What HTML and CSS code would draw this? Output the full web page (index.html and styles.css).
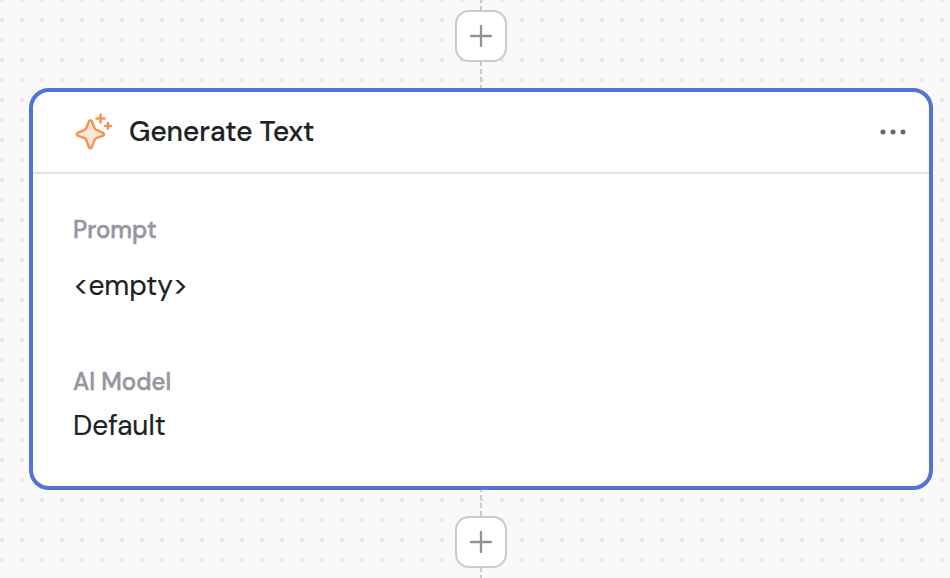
FILE: index.html
```html
<!DOCTYPE html>
<html lang="en">
<head>
    <meta charset="UTF-8">
    <meta name="viewport" content="width=device-width, initial-scale=1.0">
    <title>Workflow editor</title>
    <link rel="stylesheet" href="styles.css">
</head>
<body>
    <main class="canvas">
        <div class="line line-top"></div>
        <button class="add-btn" aria-label="Add step">
            <svg width="24" height="24" viewBox="0 0 24 24" fill="none" stroke="currentColor" stroke-width="2.3" stroke-linecap="round">
                <path d="M2 12h20M12 2v20"></path>
            </svg>
        </button>
        <div class="line line-in"></div>

        <section class="card">
            <header class="card-header">
                <svg class="icon" width="40" height="40" viewBox="0 0 40 40" fill="none" stroke="currentColor" stroke-width="2.5" stroke-linecap="round" stroke-linejoin="round">
                    <path fill="#fde8dc" d="M17 9.2Q18.4 7.2 19.8 9.2L22.6 16.1Q23.1 17.4 24.4 17.9L31.1 20.9Q33.1 22.3 31.1 23.6L24.4 26.1Q23.1 26.6 22.6 27.9L19.8 35.2Q18.4 37.2 17 35.2L14.3 27.9Q13.8 26.6 12.5 26.1L5.7 23.6Q3.7 22.3 5.7 20.9L12.5 17.9Q13.8 17.4 14.3 16.1Z"></path>
                    <path d="M28.5 2.5v8M24.5 6.5h8M36 11.1v5.6M33.2 13.9h5.6"></path>
                </svg>
                <h1>Generate Text</h1>
                <button class="menu-btn" aria-label="More options">
                    <svg width="26" height="6" viewBox="0 0 26 6" fill="currentColor">
                        <circle cx="3" cy="3" r="2.5"></circle>
                        <circle cx="13" cy="3" r="2.5"></circle>
                        <circle cx="23" cy="3" r="2.5"></circle>
                    </svg>
                </button>
            </header>
            <dl class="fields">
                <dt>Prompt</dt>
                <dd class="prompt">&lt;empty&gt;</dd>
                <dt class="model-label">AI Model</dt>
                <dd class="model">Default</dd>
            </dl>
        </section>

        <div class="line line-out"></div>
        <button class="add-btn" aria-label="Add step">
            <svg width="24" height="24" viewBox="0 0 24 24" fill="none" stroke="currentColor" stroke-width="2.3" stroke-linecap="round">
                <path d="M2 12h20M12 2v20"></path>
            </svg>
        </button>
        <div class="line line-bottom"></div>
    </main>
</body>
</html>
```

FILE: styles.css
```css
:root {
    --blue: #5274d8;
    --orange: #f79351;
    --grey: #9796a1;
    --border: #cbcad0;
    --dark: #202124;
    --font-main: 'DM Sans', Inter, 'Liberation Sans', sans-serif;
}

* {
    box-sizing: border-box;
    margin: 0;
    padding: 0;
}

body {
    font-family: var(--font-main);
    color: var(--dark);
    overflow: hidden;
}

.canvas {
    display: flex;
    flex-direction: column;
    align-items: center;
    height: 578px;
    padding-left: 12px;
    background-color: #f9f9f9;
    background-image: radial-gradient(circle, #e9e9e9 1.6px, transparent 2.6px);
    background-size: 20px 20px;
    background-position: -8px -10px;
}

/* dashed connectors between the steps */
.line {
    flex: none;
    width: 2px;
    background: repeating-linear-gradient(to bottom, #cbcad0 0 5.5px, transparent 5.5px 8px);
}

.line-top {
    height: 10px;
    background-position: 0 -2px;
    background-size: 2px 16px;
}

.line-in {
    height: 26px;
    background-position: 0 -1px;
    background-size: 2px 32px;
}

.line-out {
    height: 26px;
    background-position: 0 -3px;
    background-size: 2px 32px;
}

.line-bottom {
    height: 10px;
    background-position: 0 -1px;
    background-size: 2px 16px;
}

.add-btn {
    flex: none;
    display: flex;
    align-items: center;
    justify-content: center;
    width: 52px;
    height: 52px;
    border: 2px solid var(--border);
    border-radius: 14px;
    background: white;
    color: #92919d;
}

.card {
    flex: none;
    width: 904px;
    height: 402px;
    border: 4px solid var(--blue);
    border-radius: 20px;
    background: white;
}

.card-header {
    display: flex;
    align-items: center;
    height: 82px;
    padding: 0 23px 0 39px;
    border-bottom: 2px solid #e2e2e8;
}

.icon {
    flex: none;
    color: var(--orange);
}

h1 {
    margin-left: 17px;
    font-size: 28px;
    font-weight: 500;
    line-height: 36px;
    -webkit-text-stroke: 0.2px;
}

.menu-btn {
    display: flex;
    margin-left: auto;
    border: none;
    background: none;
    color: #68676f;
}

.fields {
    padding: 40px 40px 0;
}

dt {
    color: var(--grey);
    font-size: 24px;
    font-weight: 500;
    line-height: 32px;
    -webkit-text-stroke: 0.5px;
}

dd {
    font-size: 28px;
    line-height: 36px;
    -webkit-text-stroke: 0.2px;
}

.prompt {
    margin-top: 22px;
}

.model-label {
    margin-top: 62px;
}

.model {
    margin-top: 10px;
}
```
